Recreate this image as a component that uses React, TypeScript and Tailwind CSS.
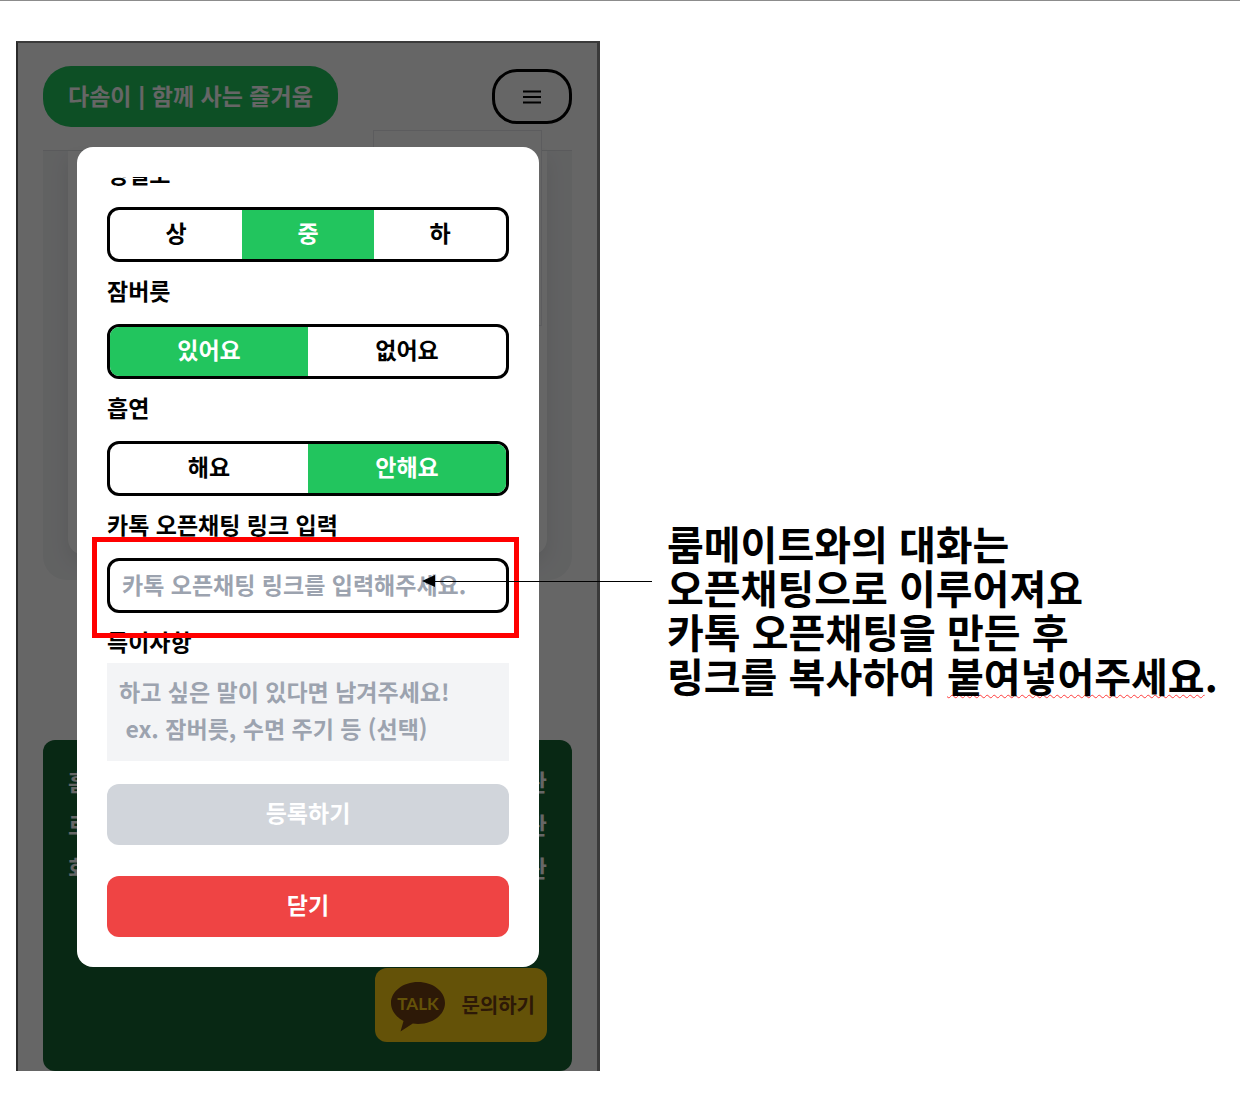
import { useState } from "react";

const fontStack = "font-['Noto_Sans_CJK_KR','Noto_Sans',sans-serif]";

function Segmented({
  label,
  name,
  options,
  initial,
}: {
  label: string;
  name: string;
  options: string[];
  initial: string;
}) {
  const [value, setValue] = useState(initial);
  return (
    <fieldset className="min-w-0">
      <legend className="pt-2.5 pb-4 leading-9">{label}</legend>
      <div className="flex h-[55px] overflow-hidden rounded-xl border-3 border-black">
        {options.map((option) => (
          <label
            key={option}
            className="flex flex-1 cursor-pointer items-center justify-center pb-1 has-checked:bg-[#22c55e] has-checked:text-white"
          >
            <input
              type="radio"
              name={name}
              className="sr-only"
              checked={value === option}
              onChange={() => setValue(option)}
            />
            {option}
          </label>
        ))}
      </div>
    </fieldset>
  );
}

function TalkIcon() {
  return (
    <svg viewBox="0 0 54 50" className="mt-1 h-[50px] w-[54px]" aria-hidden="true">
      <path
        d="M27 0C12 0 0 9.400 0 21C0 28.500 5 35.100 12.500 38.900L9.500 49.600L21.800 41.600C23.500 41.900 25.200 42 27 42C42 42 54 32.600 54 21S42 0 27 0Z"
        fill="#713f12"
      />
      <text
        x="27"
        y="28"
        textAnchor="middle"
        fontSize="17"
        fontWeight="700"
        fontFamily="Lato, sans-serif"
        fill="#facc15"
      >
        TALK
      </text>
    </svg>
  );
}

function PageBehind() {
  return (
    <div className="px-[25px]">
      <header className="relative flex h-[107px] items-center justify-between">
        <a
          href="#home"
          className="flex h-[61px] items-center rounded-[28px] bg-[#22c55e] px-[25px] pb-0.5 text-white"
        >
          <span>
            다솜이 <span className="font-['Inter'] text-xl">|</span> 함께 사는 즐거움
          </span>
        </a>
        <button
          type="button"
          aria-label="메뉴"
          className="flex h-[55px] w-20 items-center justify-center rounded-[25px] border-3 border-black"
        >
          <svg viewBox="0 0 18 14" className="h-3.5 w-[18px]" aria-hidden="true">
            <path d="M0 1.500H18M0 7H18M0 12.500H18" stroke="#000" strokeWidth="2" />
          </svg>
        </button>
        <div className="absolute top-[87px] right-[30px] h-[196px] w-[169px] border border-[#e5e7eb] bg-white" />
      </header>
      <section className="h-[430px] rounded-b-3xl border-t border-[#e0e2e5] bg-[#f3f4f6] px-[25px] pb-[25px]">
        <div className="h-full rounded-b-2xl bg-white shadow-[0_8px_20px_rgba(0,0,0,0.09)]" />
      </section>
      <footer className="mt-40 flex h-[331px] flex-col justify-between rounded-xl bg-[#166534] px-[25px] pt-5 pb-[29px] text-white">
        <div className="leading-[43px]">
          <p className="flex justify-between"><span>홈</span><span>관</span></p>
          <p className="flex justify-between"><span>로</span><span>관</span></p>
          <p className="flex justify-between"><span>회</span><span>관</span></p>
        </div>
        <button
          type="button"
          className="flex h-[74px] items-center gap-4 self-end rounded-xl bg-[#facc15] pr-3 pl-4 text-xl text-[#713f12]"
        >
          <TalkIcon />
          문의하기
        </button>
      </footer>
    </div>
  );
}

function RoommateDialog() {
  return (
    <div
      role="dialog"
      aria-label="룸메이트 등록"
      className="absolute top-[104px] right-[58px] left-[59px] rounded-2xl bg-white p-[30px] text-black"
    >
      <form onSubmit={(e) => e.preventDefault()}>
        <div className="overflow-hidden">
          <div className="-mt-8">
            <Segmented label="청결도" name="clean" options={["상", "중", "하"]} initial="중" />
            <Segmented label="잠버릇" name="sleep" options={["있어요", "없어요"]} initial="있어요" />
            <Segmented label="흡연" name="smoke" options={["해요", "안해요"]} initial="안해요" />
          </div>
        </div>
        <label htmlFor="link" className="block pt-2.5 pb-4 leading-9">
          카톡 오픈채팅 링크 입력
        </label>
        <div className="relative">
          <input
            id="link"
            type="url"
            placeholder="카톡 오픈채팅 링크를 입력해주세요."
            className="block h-[55px] w-full rounded-xl border-3 border-black px-3 pb-1 placeholder:text-[#9ca3af] placeholder:opacity-100"
          />
          <div className="pointer-events-none absolute -top-[21px] -right-2.5 -bottom-[25px] -left-[15px] z-10 border-5 border-[#ff0000]" />
          <div className="pointer-events-none absolute top-[17px] -right-[143px] z-20 flex w-[230px] items-center">
            <svg viewBox="0 0 13 12" className="h-3 w-[13px]" aria-hidden="true">
              <path d="M0 6L13 0V12Z" />
            </svg>
            <div className="h-px flex-1 bg-black" />
          </div>
        </div>
        <label htmlFor="note" className="block pt-2.5 pb-1 leading-9">
          특이사항
        </label>
        <textarea
          id="note"
          placeholder={"하고 싶은 말이 있다면 남겨주세요!\n ex. 잠버릇, 수면 주기 등 (선택)"}
          className="block h-[98px] w-full resize-none bg-[#f3f4f6] px-3 py-2.5 leading-[37px] placeholder:text-[#9ca3af] placeholder:opacity-100"
        />
        <button
          type="submit"
          className="mt-[23px] block h-[61px] w-full rounded-xl bg-[#d1d5db] pb-1 text-white"
        >
          등록하기
        </button>
        <button
          type="button"
          className="mt-[31px] block h-[61px] w-full rounded-xl bg-[#ef4444] pb-1 text-white"
        >
          닫기
        </button>
      </form>
    </div>
  );
}

export default function App() {
  return (
    <main
      lang="ko"
      className={`min-h-screen border-t border-[#8c8c8c] bg-white font-bold text-black ${fontStack}`}
    >
      <div className="flex flex-wrap pt-10 pl-4 lg:flex-nowrap">
        <div className="relative w-full max-w-[584px] shrink-0 border-t-2 border-r-3 border-l-2 border-t-[#3a3a3a] border-r-[#3a3a3a] border-l-[#2a2a2a] text-[23px]">
          <PageBehind />
          <div className="absolute inset-0 bg-black/60" />
          <RoommateDialog />
        </div>
        <p className="pt-[480px] pl-[67px] text-[40px] leading-11">
          룸메이트와의 대화는
          <br />
          오픈채팅으로 이루어져요
          <br />
          카톡 오픈채팅을 만든 후
          <br />
          링크를 복사하여{" "}
          <span className="underline decoration-[#ff3b3b] decoration-wavy decoration-1 underline-offset-2">
            붙여넣어주세요
          </span>
          .
        </p>
      </div>
    </main>
  );
}
